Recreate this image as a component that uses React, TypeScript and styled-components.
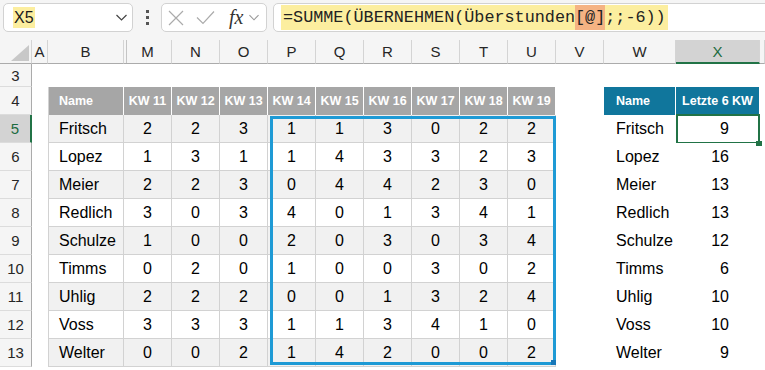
import React from 'react';
import styled, { createGlobalStyle, css } from 'styled-components';

interface Row {
    name: string;
    weeks: number[];
}

const rows: Row[] = [
    { name: 'Fritsch', weeks: [2, 2, 3, 1, 1, 3, 0, 2, 2] },
    { name: 'Lopez', weeks: [1, 3, 1, 1, 4, 3, 3, 2, 3] },
    { name: 'Meier', weeks: [2, 2, 3, 0, 4, 4, 2, 3, 0] },
    { name: 'Redlich', weeks: [3, 0, 3, 4, 0, 1, 3, 4, 1] },
    { name: 'Schulze', weeks: [1, 0, 0, 2, 0, 3, 0, 3, 4] },
    { name: 'Timms', weeks: [0, 2, 0, 1, 0, 0, 3, 0, 2] },
    { name: 'Uhlig', weeks: [2, 2, 2, 0, 0, 1, 3, 2, 4] },
    { name: 'Voss', weeks: [3, 3, 3, 1, 1, 3, 4, 1, 0] },
    { name: 'Welter', weeks: [0, 0, 2, 1, 4, 2, 0, 0, 2] },
];

const columns = ['A', 'B', 'M', 'N', 'O', 'P', 'Q', 'R', 'S', 'T', 'U', 'V', 'W', 'X', ''];
const weekLabels = [11, 12, 13, 14, 15, 16, 17, 18, 19];

const GlobalStyle = createGlobalStyle`
    html, body {
        margin: 0;
        padding: 0;
        background: #fff;
    }
    body {
        width: 765px;
        height: 370px;
        overflow: hidden;
        font-family: "Liberation Sans", Arial, sans-serif;
    }
`;

const FormulaBar = styled.div`
    height: 40px;
    box-sizing: border-box;
    background: #f5f5f5;
    display: flex;
    align-items: flex-start;
    padding: 3px 0 0 3px;
`;

const Box = styled.div`
    height: 29px;
    box-sizing: border-box;
    background: #fff;
    border: 1px solid #d2d2d2;
    border-radius: 5px;
    display: flex;
    align-items: center;
`;

const NameBox = styled(Box)`
    width: 130px;
    padding: 0 5px 0 9px;
    justify-content: space-between;
    font-size: 16px;
    color: #1a1a1a;
`;

const Marked = styled.span<{ $tone?: 'yellow' | 'orange' }>`
    background: ${p => (p.$tone === 'orange' ? '#f5b383' : '#fcee9f')};
    line-height: 21px;
    padding: 0 1px;
`;

const Dots = styled.div`
    width: 28px;
    height: 29px;
    display: flex;
    flex-direction: column;
    align-items: center;
    justify-content: center;
    gap: 3px;

    span {
        width: 3px;
        height: 3px;
        background: #555;
    }
`;

const ActionBox = styled(Box)`
    width: 106px;
    margin-right: 6px;
    padding-left: 6px;
    gap: 12px;
`;

const Fx = styled.span`
    font-family: "Liberation Serif", "DejaVu Serif", serif;
    font-style: italic;
    font-size: 20px;
    color: #333;
    margin-left: 2px;
    margin-right: -6px;
`;

const FormulaBox = styled(Box)`
    flex: 1;
    margin-right: -10px;
    border-radius: 5px 0 0 5px;
    padding-left: 7px;
    align-items: stretch;
    padding-top: 1px;
    padding-bottom: 1px;
`;

const FormulaText = styled.span`
    font-family: "Liberation Mono", "DejaVu Sans Mono", monospace;
    font-size: 16.8px;
    color: #222;
    background: #fcee9f;
    padding: 0 2px;
    display: flex;
    align-items: center;
    white-space: pre;

    ${Marked} {
        line-height: 25px;
        padding: 0;
    }
`;

const Sheet = styled.div`
    position: relative;
    display: grid;
    grid-template-columns: 32px 16px 76px repeat(9, 48px) 48px 72px 84px 1fr;
    grid-template-rows: 24px 23px;
    grid-auto-rows: 28px;
    font-size: 15px;
`;

const Corner = styled.div`
    background: #f5f5f5;
    border-right: 1px solid #d4d4d4;
    border-bottom: 1px solid #ababab;
    display: flex;
    align-items: flex-end;
    justify-content: flex-end;
    padding: 0 2px 2px 0;
`;

const ColHead = styled.div<{ $selected?: boolean; $hiddenBefore?: boolean }>`
    box-sizing: border-box;
    background: #f5f5f5;
    border-right: 1px solid #d4d4d4;
    border-bottom: 1px solid #ababab;
    display: flex;
    align-items: center;
    justify-content: center;
    color: #262626;
    ${p => p.$hiddenBefore && css`
        box-shadow: inset 2px 0 0 #f5f5f5, inset 3px 0 0 #c4c4c4;
    `}
    ${p => p.$selected && css`
        background: #d3d3d3;
        color: #1c6b40;
        border-bottom: 2px solid #217346;
    `}
`;

const RowHead = styled.div<{ $selected?: boolean }>`
    box-sizing: border-box;
    background: #f5f5f5;
    border-right: 1px solid #ababab;
    border-bottom: 1px solid #dcdcdc;
    display: flex;
    align-items: center;
    justify-content: center;
    font-size: 15px;
    color: #262626;
    ${p => p.$selected && css`
        background: #d3d3d3;
        color: #1c6b40;
        border-right: 2px solid #217346;
    `}
`;

type Variant = 'blank' | 'grayHead' | 'blueHead' | 'band' | 'plain' | 'list';

const variants: Record<Variant, ReturnType<typeof css>> = {
    blank: css``,
    grayHead: css`
        background: #a6a6a6;
        color: #fff;
        font-weight: 700;
        font-size: 12.5px;
        border-right: 1px solid #fff;
    `,
    blueHead: css`
        background: #10769c;
        color: #fff;
        font-weight: 700;
        font-size: 12.5px;
        border-right: 1px solid #fff;
    `,
    band: css`
        background: #f1f1f1;
        border-right: 1px solid #d2d2d2;
        border-bottom: 1px solid #d2d2d2;
    `,
    plain: css`
        background: #fff;
        border-right: 1px solid #d2d2d2;
        border-bottom: 1px solid #d2d2d2;
    `,
    list: css`
        background: #fff;
    `,
};

const Cell = styled.div<{ $variant?: Variant; $align?: 'left' | 'center' | 'right'; $edge?: boolean; $active?: boolean }>`
    position: relative;
    box-sizing: border-box;
    display: flex;
    align-items: center;
    justify-content: ${p => (p.$align === 'left' ? 'flex-start' : p.$align === 'right' ? 'flex-end' : 'center')};
    padding: ${p => (p.$align === 'left' ? '0 0 0 12px' : p.$align === 'right' ? '0 31px 0 0' : '0')};
    font-size: 16px;
    color: #000;
    white-space: nowrap;
    ${p => variants[p.$variant ?? 'blank']}
    ${p => p.$edge && css`
        border-left: 1px solid #d2d2d2;
        padding-left: 10px;
    `}
    ${p => p.$active && css`
        &::after {
            content: '';
            position: absolute;
            inset: -1px 0 -1px 0;
            border: 2px solid #217346;
        }
        &::before {
            content: '';
            position: absolute;
            right: -2px;
            bottom: -3px;
            width: 6px;
            height: 5px;
            background: #217346;
            z-index: 1;
        }
    `}
`;

const RangeBox = styled.div`
    position: absolute;
    grid-column: 7 / 13;
    grid-row: 4 / 13;
    inset: 1px 0 2px 2px;
    border: 3px solid #1e9ad5;
    pointer-events: none;

    &::after {
        content: '';
        position: absolute;
        right: -3px;
        bottom: -3px;
        width: 5px;
        height: 5px;
        background: #1877b8;
    }
`;

const Chevron = ({ color = '#444', w = 11 }: { color?: string; w?: number }) => (
    <svg width={w} height={7} viewBox="0 0 11 7">
        <polyline points="0.5,1 5.5,6 10.5,1" fill="none" stroke={color} strokeWidth={1.2} />
    </svg>
);

const sum = (r: Row) => r.weeks.slice(-6).reduce((a, b) => a + b, 0);

export default function App() {
    return (
        <>
            <GlobalStyle />
            <FormulaBar>
                <NameBox>
                    <Marked>X5</Marked>
                    <Chevron />
                </NameBox>
                <Dots>
                    <span />
                    <span />
                    <span />
                </Dots>
                <ActionBox>
                    <svg width="16" height="16" viewBox="0 0 16 16">
                        <path d="M1 1 L15 15 M15 1 L1 15" stroke="#ababab" strokeWidth="1.2" fill="none" />
                    </svg>
                    <svg width="19" height="15" viewBox="0 0 19 15">
                        <polyline points="1,7.5 7,13.5 18,1.5" stroke="#ababab" strokeWidth="1.2" fill="none" />
                    </svg>
                    <Fx>fx</Fx>
                    <Chevron color="#999" w={10} />
                </ActionBox>
                <FormulaBox>
                    <FormulaText>
                        =SUMME(ÜBERNEHMEN(Überstunden<Marked $tone="orange">[@]</Marked>;;-6))
                    </FormulaText>
                </FormulaBox>
            </FormulaBar>
            <Sheet>
                <Corner>
                    <svg width="18" height="16" viewBox="0 0 18 16">
                        <polygon points="18,0 18,16 0,16" fill="#c8c8c8" />
                    </svg>
                </Corner>
                {columns.map((c, i) => (
                    <ColHead key={i} $selected={c === 'X'} $hiddenBefore={c === 'M'}>
                        {c}
                    </ColHead>
                ))}

                {/* row 3 */}
                <RowHead>3</RowHead>
                {columns.map((_, i) => (
                    <Cell key={i} />
                ))}

                {/* row 4: table headers */}
                <RowHead>4</RowHead>
                <Cell />
                <Cell $variant="grayHead" $align="left" $edge>Name</Cell>
                {weekLabels.map(w => (
                    <Cell key={w} $variant="grayHead">KW {w}</Cell>
                ))}
                <Cell />
                <Cell $variant="blueHead" $align="left">Name</Cell>
                <Cell $variant="blueHead">Letzte 6 KW</Cell>
                <Cell />

                {rows.map((r, idx) => {
                    const band = idx % 2 === 0 ? 'band' : 'plain';
                    return (
                        <React.Fragment key={r.name}>
                            <RowHead $selected={idx === 0}>{idx + 5}</RowHead>
                            <Cell />
                            <Cell $variant={band} $align="left" $edge>{r.name}</Cell>
                            {r.weeks.map((v, j) => (
                                <Cell key={j} $variant={band}>{v}</Cell>
                            ))}
                            <Cell />
                            <Cell $variant="list" $align="left">{r.name}</Cell>
                            <Cell $variant="list" $align="right" $active={idx === 0}>{sum(r)}</Cell>
                            <Cell />
                        </React.Fragment>
                    );
                })}

                <RangeBox />
            </Sheet>
        </>
    );
}
